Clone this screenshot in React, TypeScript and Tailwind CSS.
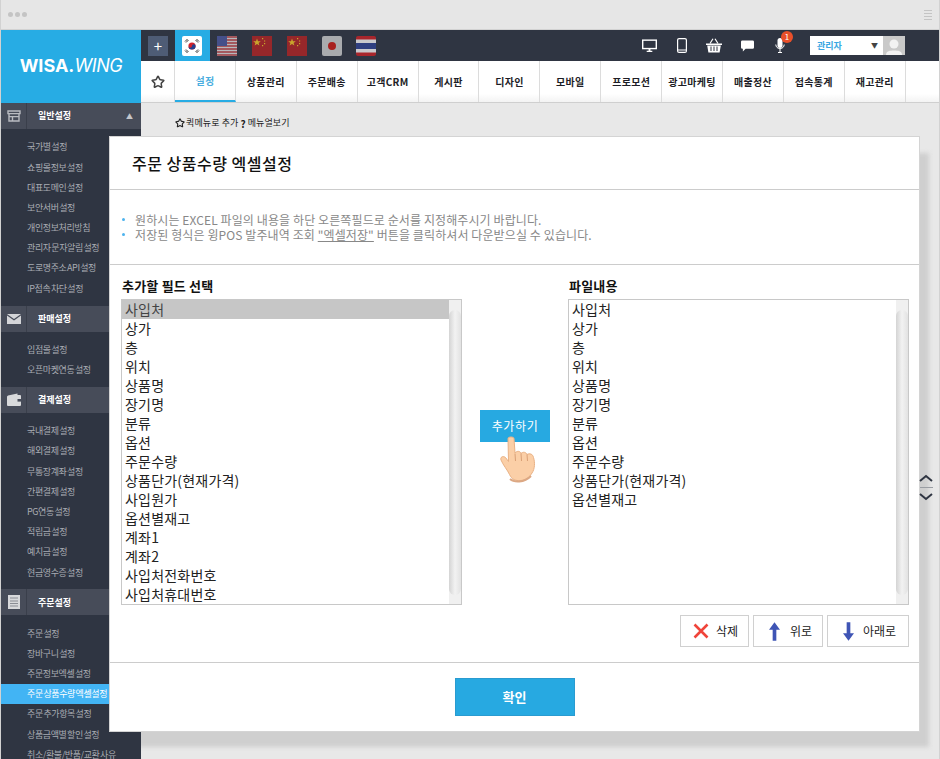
import { Star } from 'lucide-react'

const font = { fontFamily: '"Noto Sans CJK KR", "Liberation Sans", sans-serif' }

const sections = [
  {
    title: '일반설정',
    icon: 'store',
    open: true,
    items: ['국가별 설정', '쇼핑몰정보 설정', '대표도메인 설정', '보안서버 설정', '개인정보처리방침', '관리자 문자알림 설정', '도로명주소 API 설정', 'IP접속 차단 설정'],
  },
  { title: '판매설정', icon: 'mail', items: ['입점몰 설정', '오픈마켓연동 설정'] },
  {
    title: '결제설정',
    icon: 'wallet',
    items: ['국내결제 설정', '해외결제 설정', '무통장계좌 설정', '간편결제 설정', 'PG연동 설정', '적립금 설정', '예치금 설정', '현금영수증 설정'],
  },
  {
    title: '주문설정',
    icon: 'doc',
    items: ['주문 설정', '장바구니 설정', '주문정보엑셀 설정', '주문 상품수량 엑셀설정', '주문 추가항목 설정', '상품금액별 할인 설정', '취소/환불/반품/교환 사유'],
  },
]

const navItems = ['설정', '상품관리', '주문배송', '고객CRM', '게시판', '디자인', '모바일', '프로모션', '광고마케팅', '매출정산', '접속통계', '재고관리']

const leftFields = ['사입처', '상가', '층', '위치', '상품명', '장기명', '분류', '옵션', '주문수량', '상품단가(현재가격)', '사입원가', '옵션별재고', '계좌1', '계좌2', '사입처전화번호', '사입처휴대번호']
const rightFields = ['사입처', '상가', '층', '위치', '상품명', '장기명', '분류', '옵션', '주문수량', '상품단가(현재가격)', '옵션별재고']

const SectionIcon = ({ name }: { name: string }) => {
  if (name === 'store')
    return (
      <svg width="14" height="12" viewBox="0 0 14 12" fill="none" stroke="#b9bbc1" strokeWidth="1.4">
        <path d="M1 1h12v2.6H1zM2 3.6V11h10V3.6M2 6.6h10M5.5 6.6V11" />
      </svg>
    )
  if (name === 'mail')
    return (
      <svg width="14" height="10" viewBox="0 0 14 10">
        <path d="M0 0h14L7 5z" fill="#d4d5d8" />
        <path d="M0 1.600V10h14V1.600L7 6.600z" fill="#d4d5d8" />
      </svg>
    )
  if (name === 'wallet')
    return (
      <svg width="14" height="13" viewBox="0 0 14 13">
        <path d="M1 2.500 10.500.5V2H13a1 1 0 0 1 1 1v9a1 1 0 0 1-1 1H1a1 1 0 0 1-1-1V3.500z" fill="#d8d9db" />
        <rect x="10.500" y="6" width="3.500" height="2.600" fill="#474c59" />
      </svg>
    )
  return (
    <svg width="12" height="14" viewBox="0 0 12 14">
      <rect width="12" height="14" fill="#d8d9db" />
      <path d="M2 3h8M2 6h8M2 8.500h8M2 11h8" stroke="#8a8d94" strokeWidth="1" />
    </svg>
  )
}

const Flag = ({ name }: { name: string }) => {
  if (name === 'kr')
    return (
      <svg width="20" height="20" viewBox="0 0 20 20" className="rounded-[2px]">
        <rect width="20" height="20" fill="#fff" />
        <circle cx="10" cy="10" r="3.600" fill="#d2232c" />
        <path d="M6.400 10a3.600 3.600 0 0 0 7.200 0 1.800 1.800 0 0 0-3.600 0 1.800 1.800 0 0 1-3.600 0" fill="#24408e" />
        <path d="M3 5.500 5.500 3M4 6.500 6.500 4M14.500 3 17 5.500M13.500 4 16 6.500M3 14.500 5.500 17M4 13.500 6.500 16M14.500 17 17 14.500M13.500 16 16 13.500" stroke="#222" strokeWidth="0.9" />
      </svg>
    )
  if (name === 'us')
    return (
      <svg width="20" height="20" viewBox="0 0 20 20">
        <rect width="20" height="20" fill="#b8b8bc" />
        <path d="M0 1h20M0 4h20M0 7h20M0 10h20M0 13h20M0 16h20M0 19h20" stroke="#9c3a3f" strokeWidth="1.500" />
        <rect width="10" height="10" fill="#45508a" />
      </svg>
    )
  if (name === 'cn')
    return (
      <svg width="20" height="20" viewBox="0 0 20 20">
        <rect width="20" height="20" fill="#96272a" />
        <path d="m5 2.500 1 2.800h2.800L6.600 7l.8 2.600L5 8l-2.400 1.600.8-2.600L1.200 5.300H4z" fill="#c9a52d" />
        <path d="M10 2h1.200v1.200H10zM12 4.400h1.200v1.200H12zM12 7h1.200v1.200H12zM10 9h1.200v1.200H10z" fill="#c9a52d" />
      </svg>
    )
  if (name === 'jp')
    return (
      <svg width="20" height="20" viewBox="0 0 20 20" className="rounded-[2px]">
        <rect width="20" height="20" fill="#a9abae" />
        <circle cx="10" cy="10" r="4" fill="#a8201f" />
      </svg>
    )
  return (
    <svg width="20" height="20" viewBox="0 0 20 20" className="rounded-[2px]">
      <rect width="20" height="20" fill="#a8262c" />
      <rect y="3.500" width="20" height="13" fill="#c9c9cc" />
      <rect y="7" width="20" height="6" fill="#2f3f80" />
    </svg>
  )
}

const FieldList = ({ fields, selected }: { fields: string[]; selected?: boolean }) => (
  <div className="flex h-[306px] w-[341px] shrink-0 border border-[#c8c8c8] bg-white">
    <ul className="flex-1 overflow-hidden text-[14px] leading-[19px] tracking-[0.2px] text-[#222]">
      {fields.map((field, index) => (
        <li key={field} className={selected && index === 0 ? 'h-[19px] bg-[#c6c6c6] pl-[3px] text-[#444]' : 'h-[19px] pl-[3px]'}>
          {field}
        </li>
      ))}
    </ul>
    <div className="flex w-[12px] flex-col bg-[#f0f0f0]">
      <div className="mt-[10px] h-[285px] rounded-full bg-gradient-to-r from-[#d4d4d4] via-[#f2f2f2] to-[#e2e2e2]" />
    </div>
  </div>
)

const Hand = () => (
  <svg width="38" height="48" viewBox="0 0 38 48" className="absolute left-[20px] top-[26px]">
    <path
      d="M8 2.500C8 .5 14 .5 14 2.500L15 17C17 14.500 20.500 15 21 17.500C23 15.500 26 16 27 18.500C29.500 17 33 18 33.500 21.500C35 26 35 33 32 37C29.500 41 27 44 21 44.500C15 45 12 43.500 9.500 38.500C7.500 34 3 29 1 24C0 21 3 19.500 5.500 21.500L8.500 25.500Z"
      fill="#fbcfa7"
      stroke="#e9b184"
      strokeWidth="1"
    />
    <path d="M15 17.500 15.500 25M21 17.500 21.500 25M27 18.500 27.500 25" stroke="#d9a076" strokeWidth="1" fill="none" />
    <path d="M10 43C14 46.500 24 47 31 40" stroke="#dca884" strokeWidth="2" fill="none" />
  </svg>
)

const Sidebar = () => (
  <aside className="z-10 w-[140px] shrink-0 bg-[#2f3542]">
    <div className="flex h-[73px] items-center justify-center pb-[2px] bg-[#27ace4] text-[18px] font-bold text-white" style={{ fontFamily: 'Inter, "Liberation Sans", sans-serif' }}>
      WISA.<span className="font-normal italic tracking-[-0.4px]">WING</span>
    </div>
    {sections.map((section) => (
      <div key={section.title}>
        <div className="flex h-[26px] items-center bg-[#474c59] text-[9px] font-bold text-white">
          <div className="flex h-full w-[26px] items-center justify-center border-r border-[#3a3f4b]">
            <SectionIcon name={section.icon} />
          </div>
          <span className="ml-[11px] flex-1">{section.title}</span>
          {section.open && <span className="mr-[8px] text-[7px] text-[#c4c6cb]">▲</span>}
        </div>
        <ul className="pb-[7px] pt-[8px] text-[9px] tracking-[-0.4px] [word-spacing:-1px] text-[#a9acb3]">
          {section.items.map((item) => {
            const active = item === '주문 상품수량 엑셀설정'
            return (
              <li key={item} className={active ? 'flex h-[20.200px] items-center whitespace-nowrap bg-[#42b4f4] pl-[26px] text-white' : 'flex h-[20.200px] items-center whitespace-nowrap pl-[26px]'}>
                {item}
              </li>
            )
          })}
        </ul>
      </div>
    ))}
  </aside>
)

const TopBar = () => (
  <div className="flex h-[31px] items-center bg-[#2f3542]">
    <div className="ml-[7px] mr-[7px] flex h-[20px] w-[20px] items-center justify-center bg-[#4e5c75] text-[15px] leading-none text-white">+</div>
    {['kr', 'us', 'cn', 'cn', 'jp', 'th'].map((flag, index) => (
      <div key={index} className={index === 0 ? 'flex h-full w-[34.800px] items-center justify-center bg-[#27ace4]' : 'flex h-full w-[34.800px] items-center justify-center'}>
        <Flag name={flag} />
      </div>
    ))}
    <div className="ml-auto flex items-center">
      <svg width="15" height="14" viewBox="0 0 16 14" className="mr-[20px]">
        <path d="M0 0h16v10.500H0z" fill="#fff" />
        <path d="M1.500 1.500h13v7.500h-13z" fill="#2f3542" />
        <path d="M5 12h6v1.500H5zM7 10h2v2H7z" fill="#fff" />
      </svg>
      <svg width="10" height="15" viewBox="0 0 10 15" className="mr-[19px]">
        <rect x=".6" y=".6" width="8.800" height="13.800" rx="1.500" fill="none" stroke="#fff" strokeWidth="1.200" />
        <path d="M1 12h8" stroke="#fff" />
      </svg>
      <svg width="16" height="15" viewBox="0 0 16 15" className="mr-[19px]">
        <path d="M0 5.500h16v1.500H0zM1.200 7.500h13.600l-1.200 7H2.400z" fill="#fff" />
        <path d="M4 5.500 7 .8M12 5.500 9 .8" stroke="#fff" strokeWidth="1.200" />
        <path d="M5 8.500v4.500M8 8.500v4.500M11 8.500v4.500" stroke="#2f3542" />
      </svg>
      <svg width="13" height="12" viewBox="0 0 14 12" className="mr-[21px]">
        <path d="M1.500 0h11A1.500 1.500 0 0 1 14 1.500v6A1.500 1.500 0 0 1 12.500 9H5l-3 3V9h-.5A1.500 1.500 0 0 1 0 7.500v-6A1.500 1.500 0 0 1 1.500 0z" fill="#fff" />
      </svg>
      <div className="relative mr-[25px]">
        <svg width="10" height="15" viewBox="0 0 10 15">
          <rect x="2.500" y="0" width="5" height="10" rx="2.500" fill="#fff" />
          <path d="M.8 6.500a4.200 4.200 0 0 0 8.400 0M5 11v3M3 14.500h4" stroke="#fff" fill="none" />
        </svg>
        <span className="absolute left-[6px] top-[-7px] flex h-[12px] w-[12px] items-center justify-center rounded-full bg-[#e9502a] text-[8px] leading-none text-white">1</span>
      </div>
      <div className="mr-[34px] flex h-[19px] w-[95px] bg-white">
        <span className="ml-[7px] flex-1 self-center text-[9px] font-bold text-[#3aa7e2]">관리자</span>
        <span className="mr-[5px] self-center text-[7px] text-[#444]">▼</span>
        <div className="flex h-full w-[22px] items-end justify-center overflow-hidden bg-[#c9c9c9]">
          <svg width="18" height="17" viewBox="0 0 18 17">
            <circle cx="9" cy="6" r="4.500" fill="#f2f2f2" />
            <path d="M1 17c0-4 4-4.500 8-4.500s8 .5 8 4.500z" fill="#f2f2f2" />
          </svg>
        </div>
      </div>
    </div>
  </div>
)

const NavBar = () => (
  <nav className="flex h-[42px] border-b border-[#cfcfcf] bg-gradient-to-b from-white from-80% to-[#f3f3f3]">
    <div className="flex w-[34px] shrink-0 items-center justify-center border-r border-[#dcdcdc]">
      <Star size={14} strokeWidth={2.600} className="text-[#444]" />
    </div>
    {navItems.map((item, index) => (
      <div
        key={item}
        className={
          index === 0
            ? 'flex w-[60.900px] items-center justify-center whitespace-nowrap border-b-2 border-r border-b-[#27ace4] border-r-[#dcdcdc] text-[10px] font-bold tracking-[0.3px] text-[#4aaee0]'
            : 'flex w-[60.900px] items-center justify-center whitespace-nowrap border-r border-[#dcdcdc] text-[10px] font-bold tracking-[0.3px] text-[#1d1d26]'
        }
      >
        {item}
      </div>
    ))}
  </nav>
)

const ActionButton = ({ label, className, children }: { label: string; className: string; children: React.ReactNode }) => (
  <button className={`flex h-[32px] items-center border border-[#d0d0d0] bg-white text-[12px] text-[#222] ${className}`}>
    {children}
    {label}
  </button>
)

const Modal = () => (
  <div className="absolute left-[110px] top-[137px] z-20 flex h-[594px] w-[809px] flex-col bg-white shadow-[0_0_0_1px_#d4d4d4]" style={font}>
    <div className="flex h-[53px] shrink-0 items-center border-b border-[#cccccc] pl-[22px] text-[16px] font-medium tracking-[0.5px] text-[#111]">주문 상품수량 엑셀설정</div>
    <div className="flex h-[75px] shrink-0 flex-col justify-center border-b border-[#cccccc] pl-[12px] text-[12px] leading-[15px] tracking-[0.1px] text-[#888]">
      <p className="flex items-center">
        <span className="mr-[10px] h-[3px] w-[3px] rounded-full bg-[#4db3ee]" />
        원하시는 EXCEL 파일의 내용을 하단 오른쪽필드로 순서를 지정해주시기 바랍니다.
      </p>
      <p className="flex items-center">
        <span className="mr-[10px] h-[3px] w-[3px] rounded-full bg-[#4db3ee]" />
        저장된 형식은 윙POS 발주내역 조회&nbsp;<span className="underline">"엑셀저장"</span>&nbsp;버튼을 클릭하셔서 다운받으실 수 있습니다.
      </p>
    </div>
    <div className="flex h-[398px] shrink-0 flex-col border-b border-[#cccccc] pl-[11px] pr-[10px]">
      <div className="flex items-start pt-[13px]">
        <div>
          <h3 className="mb-[5px] h-[16px] pl-[1px] text-[13px] font-bold leading-[16px] tracking-[0.2px] text-[#111]">추가할 필드 선택</h3>
          <FieldList fields={leftFields} selected />
        </div>
        <div className="flex w-[106px] flex-col items-center self-stretch pt-[132px]">
          <div className="relative">
            <button className="h-[32px] w-[70px] bg-[#27a9e1] text-[12px] tracking-[0.6px] text-white">추가하기</button>
            <Hand />
          </div>
        </div>
        <div>
          <h3 className="mb-[5px] h-[16px] pl-[1px] text-[13px] font-bold leading-[16px] tracking-[0.2px] text-[#111]">파일내용</h3>
          <FieldList fields={rightFields} />
        </div>
      </div>
      <div className="mt-[10px] flex justify-end gap-[4px]">
        <ActionButton label="삭제" className="w-[69px] gap-[7px] pl-[12px]">
          <svg width="16" height="16" viewBox="0 0 16 16">
            <path d="M1.500 1.500 14.500 14.500M14.500 1.500 1.500 14.500" stroke="#f0443a" strokeWidth="2.600" />
          </svg>
        </ActionButton>
        <ActionButton label="위로" className="w-[70px] gap-[10px] pl-[15px]">
          <svg width="11" height="19" viewBox="0 0 12 20">
            <path d="M6 0 12 8H8V20H4V8H0z" fill="#3f55b5" />
          </svg>
        </ActionButton>
        <ActionButton label="아래로" className="w-[82px] gap-[9px] pl-[15px]">
          <svg width="11" height="19" viewBox="0 0 12 20">
            <path d="M6 20 12 12H8V0H4V12H0z" fill="#3f55b5" />
          </svg>
        </ActionButton>
      </div>
    </div>
    <div className="flex flex-1 items-start justify-center pt-[15px]">
      <button className="h-[38px] w-[120px] border border-[#2a9bd0] bg-[#27a9e1] text-[13px] font-bold text-white">확인</button>
    </div>
  </div>
)

const App = () => {
  return (
    <div className="relative h-[759px] w-[940px] overflow-hidden bg-[#e6e6e6]" style={font}>
      <header className="flex h-[30px] items-center justify-between border-x border-b border-[#d2d2d2] px-[7px]">
        <div className="flex gap-[2px]">
          <span className="h-[5px] w-[5px] rounded-full bg-[#c4c4c4]" />
          <span className="h-[5px] w-[5px] rounded-full bg-[#c4c4c4]" />
          <span className="h-[5px] w-[5px] rounded-full bg-[#c4c4c4]" />
        </div>
        <div className="flex w-[8px] flex-col gap-[2px]">
          <span className="h-px bg-[#c4c4c4]" />
          <span className="h-px bg-[#c4c4c4]" />
          <span className="h-px bg-[#c4c4c4]" />
          <span className="h-px bg-[#c4c4c4]" />
        </div>
      </header>
      <div className="flex h-[729px] border-x border-[#d2d2d2]">
        <Sidebar />
        <main className="relative flex-1 overflow-hidden bg-[#e8e8e8]">
          <TopBar />
          <NavBar />
          <div className="flex h-[38px] items-center pl-[34px] pt-[2px] text-[9px] tracking-[0.1px] text-[#222]">
            <Star size={10} strokeWidth={2.600} className="mr-[1px]" />
            퀵메뉴로 추가
            <span className="mx-[2px] text-[10px] font-bold">?</span>
            메뉴얼보기
          </div>
          {/* modal shadow, clipped by the sidebar */}
          <div className="absolute left-[-10px] top-[123px] h-[594px] w-[798px] bg-[#cfcfcf] blur-[2px]" />
        </main>
      </div>
      <Modal />
      <svg width="14" height="28" viewBox="0 0 14 28" className="absolute left-[919px] top-[473px] z-30" fill="none" stroke="#2f3542" strokeWidth="2">
        <path d="M1 8 7 3 13 8M1 21 7 26 13 21" />
        <path d="M1 14.500h13" stroke="#9a9da3" strokeWidth="1" />
      </svg>
    </div>
  )
}

export default App
